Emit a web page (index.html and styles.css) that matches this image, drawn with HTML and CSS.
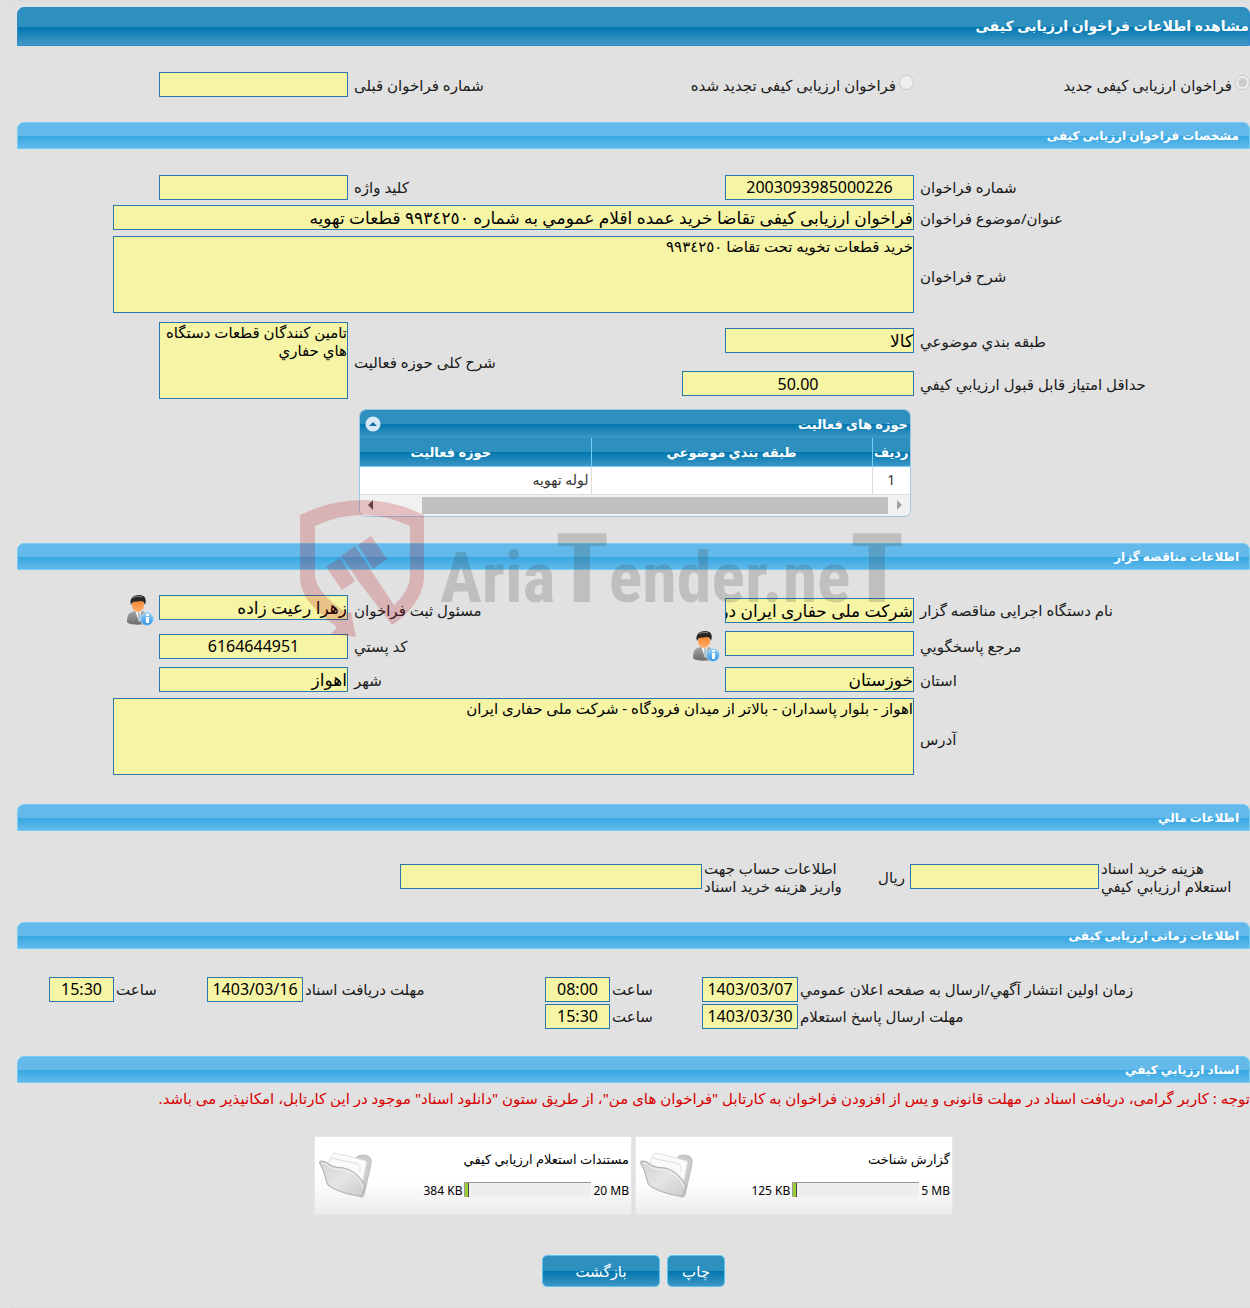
FILE: index.html
```html
<!DOCTYPE html>
<html lang="fa" dir="rtl">
<head>
<meta charset="utf-8">
<title>مشاهده اطلاعات فراخوان ارزیابی کیفی</title>
<link rel="stylesheet" href="styles.css">
</head>
<body>
<svg class="defs" aria-hidden="true">
  <defs>
    <linearGradient id="skin" x1="0" y1="0" x2="0" y2="1"><stop offset="0" stop-color="#f47b20"/><stop offset="1" stop-color="#ffb070"/></linearGradient>
    <linearGradient id="suit" x1="0" y1="0" x2="0" y2="1"><stop offset="0" stop-color="#a5a5a5"/><stop offset="1" stop-color="#6c6c6c"/></linearGradient>
    <linearGradient id="info" x1="0" y1="0" x2="0" y2="1"><stop offset="0" stop-color="#9bd2f7"/><stop offset="1" stop-color="#2f8fe0"/></linearGradient>
    <linearGradient id="fold" x1="0" y1="0" x2="1" y2="1"><stop offset="0" stop-color="#d2d2d2"/><stop offset=".5" stop-color="#e4e4e4"/><stop offset="1" stop-color="#cccccc"/></linearGradient>
    <symbol id="person" viewBox="0 0 28 31">
      <path d="M1 27c0-7 2-10 8-11h7c5 1 7 4 7 11-2 3-19 4-22 0z" fill="url(#suit)"/>
      <path d="M9 15l4 12 3-12z" fill="#f4f4f4"/><path d="M12 17h2l1 7-2 3-1-3z" fill="#b9c3cc"/>
      <ellipse cx="12" cy="10" rx="6" ry="7" fill="url(#skin)"/>
      <path d="M5 10C3 4 7 0 13 0c6 0 8 4 6 10-1-3-2-4-4-4-4 1-8 0-9 2z" fill="#262626"/>
      <path d="M7 3c3-2 6-2 9-1" stroke="#8a8a8a" fill="none"/>
      <circle cx="21" cy="24" r="6.500" fill="url(#info)" stroke="#b5dcf7"/>
      <path d="M20 19h3v2h-3zM20 22h3v6h-3z" fill="#fff"/>
    </symbol>
    <symbol id="folder" viewBox="0 0 54 48">
      <path d="M34 8q3 0 5-3 4-2 10 0 4 2 3 8l-7 31q-1 3-4 2z" fill="#cbcbcb" stroke="#bdbdbd"/>
      <path d="M10 13q0-7 5-11l14 3 18 5q1 2 0 4l-4 20-30-14z" fill="#fafafa" stroke="#e2e2e2"/>
      <path d="M12 7l27 6q3 2 2 8" fill="none" stroke="#dedede"/>
      <path d="M1 10q5-1 10 4 5 3 14 3 9 2 15 9 5 5 6 9l-3 9q-1 2-4 1-18-3-29-10-2-1-3-6-2-10-6-16-1-2 0-3z" fill="url(#fold)" stroke="#ababab"/>
      <path d="M3 12q5 1 9 5 5 2 13 2 12 3 19 17" fill="none" stroke="#f2f2f2"/>
    </symbol>
  </defs>
</svg>

<main class="page">
  <h1 class="title-bar">مشاهده اطلاعات فراخوان ارزیابی کیفی</h1>

  <div class="form-grid form-grid--kind">
    <div class="option"><input type="radio" name="kind" id="k1" checked disabled><label for="k1">فراخوان ارزیابی کیفی جدید</label></div>
    <div class="option"><input type="radio" name="kind" id="k2" disabled><label for="k2">فراخوان ارزیابی کیفی تجدید شده</label></div>
    <label class="label" for="prev">شماره فراخوان قبلی</label>
    <div class="field"><input class="box" id="prev" readonly></div>
  </div>

  <section>
    <h2 class="section-bar">مشخصات فراخوان ارزیابی کیفی</h2>
    <div class="form-grid form-grid--spec">
      <label class="label" for="num">شماره فراخوان</label>
      <div class="field"><input class="box num" id="num" value="2003093985000226" readonly></div>
      <label class="label" for="key">کلید واژه</label>
      <div class="field"><input class="box" id="key" readonly></div>

      <label class="label" for="subject">عنوان/موضوع فراخوان</label>
      <div class="field field--wide"><input class="box box--full" id="subject" value="فراخوان ارزیابی کیفی تقاضا خرید عمده اقلام عمومي به شماره ٩٩٣٤٢٥٠ قطعات تهویه" readonly></div>

      <label class="label" for="desc">شرح فراخوان</label>
      <div class="field field--wide field--top"><textarea class="box box--area box--full" id="desc" readonly>خرید قطعات تخویه تحت تقاضا ٩٩٣٤٢٥٠</textarea></div>

      <label class="label" for="cat">طبقه بندي موضوعي</label>
      <div class="field"><input class="box" id="cat" value="کالا" readonly></div>
      <label class="label label--tall" for="scope">شرح کلی حوزه فعالیت</label>
      <div class="field field--tall"><textarea class="box box--area" id="scope" readonly>تامین کنندگان قطعات دستگاه هاي حفاري</textarea></div>

      <label class="label label--first" for="min">حداقل امتیاز قابل قبول ارزيابي کیفي</label>
      <div class="field"><input class="box box--mid num" id="min" value="50.00" readonly></div>
    </div>

    <div class="panel">
      <div class="panel-head">
        <h3>حوزه های فعالیت</h3>
        <button class="collapse" type="button" aria-label="بستن"><svg viewBox="0 0 16 16" width="16" height="16"><circle cx="8" cy="8" r="7.500" fill="#d9e8f7"/><path d="M4 10l4-4 4 4z" fill="#1272a8"/></svg></button>
      </div>
      <div class="panel-body">
        <table class="grid">
          <thead><tr><th class="col-row">ردیف</th><th class="col-cat">طبقه بندي موضوعي</th><th>حوزه فعالیت</th></tr></thead>
          <tbody><tr><td class="center">1</td><td></td><td>لوله تهویه</td></tr></tbody>
        </table>
      </div>
      <div class="scroll">
        <svg width="6" height="10" viewBox="0 0 6 10"><path d="M1 0l5 5-5 5z" fill="#a3a3a3"/></svg>
        <span class="thumb"></span>
        <svg width="6" height="10" viewBox="0 0 6 10"><path d="M5 0L0 5l5 5z" fill="#505050"/></svg>
      </div>
    </div>
  </section>

  <section class="org">
    <h2 class="section-bar">اطلاعات مناقصه گزار</h2>
    <div class="form-grid form-grid--org">
      <label class="label" for="org">نام دستگاه اجرایی مناقصه گزار</label>
      <div class="field"><input class="box" id="org" value="شرکت ملی حفاری ایران در اهواز" readonly></div>
      <label class="label" for="reg">مسئول ثبت فراخوان</label>
      <div class="field field--icon"><input class="box" id="reg" value="زهرا رعیت زاده" readonly><svg class="person" width="28" height="31"><use href="#person"/></svg></div>

      <label class="label" for="contact">مرجع پاسخگويي</label>
      <div class="field field--icon"><input class="box" id="contact" readonly><svg class="person" width="28" height="31"><use href="#person"/></svg></div>
      <label class="label" for="post">کد پستي</label>
      <div class="field"><input class="box num" id="post" value="6164644951" readonly></div>

      <label class="label" for="prov">استان</label>
      <div class="field"><input class="box" id="prov" value="خوزستان" readonly></div>
      <label class="label" for="city">شهر</label>
      <div class="field"><input class="box" id="city" value="اهواز" readonly></div>

      <label class="label" for="addr">آدرس</label>
      <div class="field field--wide field--top"><textarea class="box box--area box--full" id="addr" readonly>اهواز - بلوار پاسداران - بالاتر از میدان فرودگاه - شرکت ملی حفاری ایران</textarea></div>
    </div>
    <div class="watermark" dir="ltr" aria-hidden="true">
      <svg width="126" height="138" viewBox="0 0 126 138">
        <g fill="#b40010">
          <path d="M0 15Q62-15 124 15V76C124 94 112 112 92 125L56 78 70 69 94 105Q110 90 110 76V26Q62 4 15 26V76Q17 94 47 113L51 112 56 137 31 134 37 127C12 108 0 96 0 76z"/>
          <path d="M26 67l14-9 15 23-13 9zM41 56l14-10 16 24-14 9zM58 45l13-9 16 23-14 10z"/>
        </g>
      </svg>
      <span class="wordmark">Aria<b>T</b>ender.ne<b>T</b></span>
    </div>
  </section>

  <section>
    <h2 class="section-bar">اطلاعات مالي</h2>
    <div class="money">
      <label class="label" for="cost">هزینه خرید اسناد<br>استعلام ارزيابي کيفي</label>
      <div class="field"><input class="box" id="cost" readonly><span>ریال</span></div>
      <label class="label" for="acct">اطلاعات حساب جهت<br>واریز هزینه خرید اسناد</label>
      <div class="field"><input class="box box--acct" id="acct" readonly></div>
    </div>
  </section>

  <section>
    <h2 class="section-bar">اطلاعات زمانی ارزیابی کیفی</h2>
    <div class="times">
      <label class="label" for="d1">زمان اولین انتشار آگهي/ارسال به صفحه اعلان عمومي</label>
      <input class="box box--fit num" id="d1" value="1403/03/07" readonly>
      <label class="label" for="t1">ساعت</label>
      <input class="box box--fit num" id="t1" value="08:00" readonly>
      <label class="label" for="d2">مهلت دریافت اسناد</label>
      <input class="box box--fit num" id="d2" value="1403/03/16" readonly>
      <label class="label" for="t2">ساعت</label>
      <input class="box box--fit num" id="t2" value="15:30" readonly>
      <label class="label label--first" for="d3">مهلت ارسال پاسخ استعلام</label>
      <input class="box box--fit num" id="d3" value="1403/03/30" readonly>
      <label class="label" for="t3">ساعت</label>
      <input class="box box--fit num" id="t3" value="15:30" readonly>
    </div>
  </section>

  <section>
    <h2 class="section-bar">اسناد ارزيابي کيفي</h2>
    <p class="notice">توجه : کاربر گرامی، دریافت اسناد در مهلت قانونی و پس از افزودن فراخوان به کارتابل "فراخوان های من"، از طریق ستون "دانلود اسناد" موجود در این کارتابل، امکانپذیر می باشد.</p>
    <div class="files">
      <article class="file">
        <div class="file-info">
          <p>گزارش شناخت</p>
          <div class="usage"><span dir="ltr">5 MB</span><span class="meter"><i></i></span><span dir="ltr">125 KB</span></div>
        </div>
        <svg width="54" height="48"><use href="#folder"/></svg>
      </article>
      <article class="file">
        <div class="file-info">
          <p>مستندات استعلام ارزيابي کيفي</p>
          <div class="usage"><span dir="ltr">20 MB</span><span class="meter"><i></i></span><span dir="ltr">384 KB</span></div>
        </div>
        <svg width="54" height="48"><use href="#folder"/></svg>
      </article>
    </div>
    <div class="actions">
      <button type="button" class="btn">چاپ</button>
      <button type="button" class="btn btn--wide">بازگشت</button>
    </div>
  </section>
</main>
</body>
</html>
```
FILE: styles.css
```css
* { box-sizing: border-box; }
body {
  margin: 0;
  background: #e1e1e1;
  color: #1a1a1a;
  font: 15px/18px "Noto Sans", "DejaVu Sans", sans-serif;
}
h1, h2, h3, p { margin: 0; }
.defs { position: absolute; width: 0; height: 0; }

.page {
  margin-left: 10px;
  padding: 6px 0 20px 6px;
  border: 1px solid #dcdcdc;
  border-right: 0;
}

.title-bar {
  height: 39px;
  border: 1px solid #2b8bcb;
  border-radius: 7px 7px 0 0;
  background: linear-gradient(#2d90bf 0 50%, #0076ae 51%, #4299c6);
  color: #fff;
  font-size: 14px;
  line-height: 36px;
}
.section-bar {
  height: 27px;
  padding-right: 10px;
  border: 1px solid #74cdf5;
  border-radius: 7px 7px 0 0;
  background: linear-gradient(#62b9ea 0 50%, #37a6e1 51%, #60baeb);
  color: #fff;
  font-size: 12px;
  line-height: 26px;
}

/* label / field / label / field */
.form-grid {
  display: grid;
  grid-template-columns: minmax(0, 330fr) minmax(0, 409fr) minmax(0, 145fr) minmax(0, 331fr);
  gap: 6px;
  align-items: center;
}
.form-grid--kind { padding: 26px 0 25px; }
.form-grid--spec {
  grid-template-rows: 24px 25px 80px 37px 37px;
  padding: 26px 0 7px;
}
.form-grid--org {
  grid-template-rows: 29px 31px 24px 82px;
  padding: 26px 0 24px;
}
.option { display: flex; align-items: center; gap: 3px; white-space: nowrap; }
.option input { width: 15px; height: 15px; margin: 0 0 4px; }
.label { text-align: left; white-space: nowrap; }
.label--first { grid-column-start: 1; }
.label--tall, .field--tall { grid-row: 4 / span 2; }
.label--tall { grid-column: 3; }
.field--tall { grid-column: 4; align-self: start; }
.field { display: flex; align-items: center; gap: 5px; }
.field--icon { align-items: flex-start; }
.field--wide { grid-column: 2 / -1; margin-left: 96px; }
.field--top { align-self: start; }

.box {
  width: 189px;
  height: 25px;
  margin: 0;
  padding: 0;
  border: 1px solid #2878ae;
  border-radius: 0;
  outline: 0;
  background: #f6f4a5;
  color: #000;
  font: 17px/22px "Noto Sans", "DejaVu Sans", sans-serif;
}
.box--area { display: block; height: 77px; font-size: 15px; line-height: 18px; resize: none; overflow: hidden; }
.box--full { width: 100%; }
.box--mid { width: 232px; }
.box--acct { width: 302px; }
.box--fit { width: 100%; }
.num { direction: ltr; text-align: center; font-size: 16px; }

.panel {
  width: 552px;
  margin-right: 339px;
  border: 1px solid #9cc8e8;
  border-radius: 7px;
  overflow: hidden;
  color: #333;
}
.panel-head {
  display: flex;
  align-items: center;
  justify-content: space-between;
  height: 28px;
  padding: 0 2px 0 5px;
  background: linear-gradient(#2d90bf 0 50%, #0076ae 51%, #3d96c4);
  border-bottom: 1px solid #3a97d3;
}
.panel-head h3 { color: #fff; font-size: 13px; }
.collapse { display: flex; padding: 0; border: 0; background: none; }
.panel-body { overflow: hidden; }
.grid { width: 600px; table-layout: fixed; border-collapse: collapse; font-size: 14px; }
.grid th {
  height: 28px;
  padding: 0;
  border-left: 1px solid #74cdf5;
  border-bottom: 1px solid #74cdf5;
  background: linear-gradient(#2d90bf 0 50%, #0076ae 51%, #3d96c4);
  color: #fff;
  font-size: 13px;
}
.grid td { height: 28px; padding: 0 2px; border: 1px solid #ddd; border-right: 0; background: #fff; }
.grid .center { text-align: center; }
.col-row { width: 38px; }
.col-cat { width: 281px; }
.scroll { display: flex; align-items: center; gap: 8px; height: 21px; padding: 0 8px; background: #f1f1f1; }
.thumb { flex: 1; height: 17px; margin-left: 40px; background: #c1c1c1; }

.org { position: relative; margin-top: 26px; }
.watermark {
  position: absolute;
  left: 283px;
  top: -43px;
  display: flex;
  gap: 14px;
  opacity: .2;
  pointer-events: none;
}
.wordmark {
  padding-top: 24px;
  color: #3c3c3c;
  font: bold 70px/90px "Roboto Condensed", "Liberation Sans Narrow", "Open Sans Condensed", "DejaVu Sans Condensed", sans-serif;
}
.wordmark b { font-size: 96px; }

.money {
  display: grid;
  grid-template-columns: 149fr 253fr 140fr 685fr;
  gap: 2px;
  padding: 28px 0 27px;
}
.money .field { align-self: center; }

.times {
  display: grid;
  grid-template-columns: 450fr 96px 88fr 65px 238fr 96px 89fr 65px;
  gap: 2px;
  align-items: center;
  padding: 28px 0 27px 32px;
}

.notice { padding-top: 6px; color: #d80000; white-space: nowrap; overflow: hidden; }
.files { display: flex; justify-content: center; gap: 3px; padding: 29px 0 40px; }
.file {
  display: flex;
  align-items: center;
  justify-content: space-between;
  width: 318px;
  height: 79px;
  padding: 0 2px 0 4px;
  border: 1px solid #e6e6e6;
  background: linear-gradient(#fff 55%, #ececec);
  color: #000;
  font-size: 12px;
}
.file-info { display: grid; gap: 14px; }
.file-info p { font-size: 13px; }
.usage { display: flex; gap: 2px; }
.meter { width: 127px; height: 15px; border: solid #999; border-width: 1px 0 0 1px; background: #eee; direction: ltr; }
.meter i { display: block; width: 4px; height: 14px; background: #9acd32; border-right: 1px solid #444; }

.actions { display: flex; justify-content: center; gap: 7px; }
.btn {
  width: 58px;
  height: 32px;
  padding: 0;
  border: 1px solid #5cc4f0;
  border-radius: 5px;
  background: linear-gradient(#2d90bf 0 50%, #0076ae 51%, #3d96c4);
  color: #fff;
  font: 15px/18px "Noto Sans", "DejaVu Sans", sans-serif;
}
.btn--wide { width: 118px; }
```
